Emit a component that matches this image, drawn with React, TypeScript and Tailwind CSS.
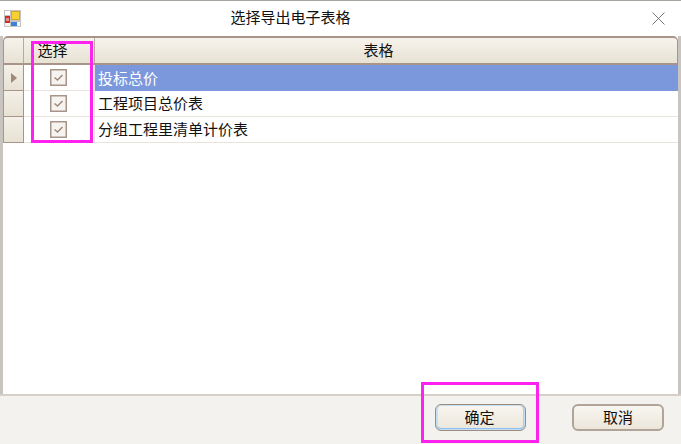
const font = { fontFamily: '"Noto Sans CJK SC", "Liberation Sans", sans-serif' }

const rows = ['投标总价', '工程项目总价表', '分组工程里清单计价表']

function AppIcon() {
  return (
    <svg width="17" height="17" viewBox="0 0 17 17" className="shrink-0">
      <rect x="0" y="0" width="17" height="17" fill="#c4c4c4" />
      <rect x="1" y="1" width="5" height="4" fill="#fff" />
      <rect x="1" y="12" width="5" height="4" fill="#f4f4f4" />
      <rect x="12" y="12" width="4" height="4" fill="#f4f4f4" />
      <rect x="7" y="1" width="9" height="9" fill="#d8a818" />
      <rect x="8" y="2" width="7" height="7" fill="#f8d030" />
      <rect x="1" y="6" width="5" height="7" fill="#c83028" />
      <rect x="2" y="8" width="3" height="3" fill="#e89088" />
      <rect x="7" y="12" width="6" height="4" fill="#3c80d8" />
    </svg>
  )
}

function CheckBox() {
  return (
    <svg width="17" height="17" viewBox="0 0 17 17">
      <rect x="0.75" y="0.75" width="15.5" height="15.5" fill="#f6f4f0" stroke="#a89488" strokeWidth="1.5" />
      <path d="M4.5 8.5 L7.5 11 L12.5 6" fill="none" stroke="#a08878" strokeWidth="1.5" />
    </svg>
  )
}

export default function App() {
  return (
    <div className="relative w-[681px] h-[444px] overflow-hidden bg-white flex flex-col text-[15px] text-[#111]" style={font}>
      <div className="h-[1px] shrink-0 bg-[#a8a4a0]" />
      {/* Title bar */}
      <div className="h-[35px] shrink-0 flex items-center pl-[4px] pr-[16px]">
        <AppIcon />
        <div className="w-[539px] text-center leading-none pb-[4px]">选择导出电子表格</div>
        <svg width="13" height="13" viewBox="0 0 13 13" className="ml-auto">
          <path d="M0.5 0.5 L12.5 12.5 M12.5 0.5 L0.5 12.5" stroke="#777" strokeWidth="1" />
        </svg>
      </div>

      {/* Grid */}
      <div className="flex-1 min-h-0 border-l-[3px] border-r-[3px] border-[#c8c4c0]">
        <div className="flex h-[29px] border-y-2 border-x border-[#a89488] bg-gradient-to-b from-[#f6f3ec] to-[#e8e2d4] rounded-t-[5px]">
          <div className="w-[20px] border-r border-[#b8aa9c]" />
          <div className="w-[71px] border-r border-[#b8aa9c] flex items-center justify-center pr-[13px]">选择</div>
          <div className="flex-1 flex items-center justify-center pr-[15px]">表格</div>
        </div>
        {rows.map((row, i) => (
          <div key={row} className="flex h-[26px]">
            <div className="w-[21px] border border-t-0 border-[#a89488] bg-gradient-to-b from-[#f4f0e8] to-[#e8e2d4] flex items-center justify-center">
              {i === 0 && <div className="border-y-[5px] border-l-[6px] border-y-transparent border-l-[#a08878]" />}
            </div>
            <div className="w-[71px] border-b border-r border-[#e8e4dc] flex items-center justify-center pr-[1px]">
              <CheckBox />
            </div>
            <div className={i === 0 ? 'flex-1 pl-[3px] flex items-center bg-[#7b98dc] text-white' : 'flex-1 pl-[3px] flex items-center border-b border-[#e8e4dc]'}>
              {row}
            </div>
          </div>
        ))}
      </div>

      {/* Button bar */}
      <div className="h-[50px] shrink-0 bg-[#f4f2ee] border-t-2 border-[#d8d0c8] flex items-start pt-[8px] pl-[435px]">
        <button className="w-[91px] h-[27px] rounded-[6px] border border-[#9c8c80] bg-gradient-to-b from-[#f8f6f0] to-[#ece6da] shadow-[inset_0_0_0_1px_#c4e0f4,inset_0_-2px_0_0_#8cc0f0,inset_2px_0_0_0_#c4e0f4,inset_-2px_0_0_0_#a8d0f0] pb-[1px] pr-[2px]">确定</button>
        <button className="ml-[46px] w-[92px] h-[27px] rounded-[6px] border-2 border-[#b0a498] bg-gradient-to-b from-[#f8f6f0] to-[#ece6da] pb-[1px]">取消</button>
      </div>

      {/* Annotation boxes */}
      <div className="absolute left-[31px] top-[41px] w-[62px] h-[102px] border-[3px] border-[#ff22ee]" />
      <div className="absolute left-[421px] top-[382px] w-[118px] h-[61px] border-[3px] border-[#ff22ee]" />
    </div>
  )
}
